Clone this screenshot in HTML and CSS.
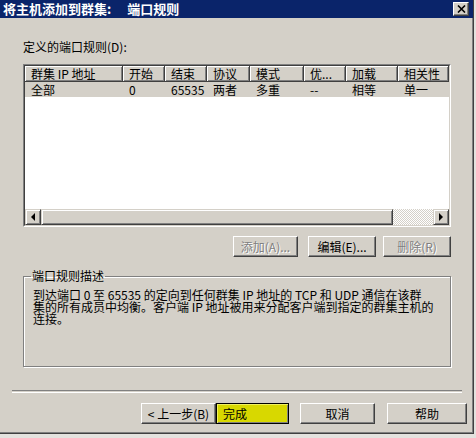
FILE: index.html
```html
<!DOCTYPE html>
<html lang="zh-CN">
<head>
    <meta charset="UTF-8">
    <title>将主机添加到群集: 端口规则</title>
    <link rel="stylesheet" href="styles.css">
</head>
<body>

    <div class="window">
        <div class="titlebar">
            <span class="title">将主机添加到群集:<span class="title-step">端口规则</span></span>
            <span class="close-btn">
                <svg width="9" height="8" viewBox="0 0 9 8">
                    <path d="M1 0.5 L8 7.5 M8 0.5 L1 7.5" stroke="#000" stroke-width="1.6" fill="none"/>
                </svg>
            </span>
        </div>

        <div class="content">
            <div class="label">定义的端口规则(<u>D</u>):</div>

            <div class="list">
                <div class="list-inner">
                    <div class="list-header">
                        <div class="col">群集 IP 地址</div>
                        <div class="col">开始</div>
                        <div class="col">结束</div>
                        <div class="col">协议</div>
                        <div class="col">模式</div>
                        <div class="col">优...</div>
                        <div class="col">加载</div>
                        <div class="col">相关性</div>
                    </div>
                    <div class="list-row selected">
                        <div class="cell">全部</div>
                        <div class="cell">0</div>
                        <div class="cell">65535</div>
                        <div class="cell">两者</div>
                        <div class="cell">多重</div>
                        <div class="cell">--</div>
                        <div class="cell">相等</div>
                        <div class="cell">单一</div>
                    </div>
                    <div class="list-body"></div>
                    <div class="hscroll">
                        <div class="scroll-btn"><span class="arrow-left"></span></div>
                        <div class="scroll-thumb"></div>
                        <div class="scroll-track"></div>
                        <div class="scroll-btn"><span class="arrow-right"></span></div>
                    </div>
                </div>
            </div>

            <div class="list-buttons">
                <button class="btn btn-add" disabled>添加(<u>A</u>)...</button>
                <button class="btn btn-edit">编辑(<u>E</u>)...</button>
                <button class="btn btn-delete" disabled>删除(<u>R</u>)</button>
            </div>

            <fieldset class="group">
                <legend>端口规则描述</legend>
                <div class="desc">
                    到达端口 0 至 65535 的定向到任何群集 IP 地址的 TCP 和 UDP 通信在该群<br>
                    集的所有成员中均衡。客户端 IP 地址被用来分配客户端到指定的群集主机的<br>
                    连接。
                </div>
            </fieldset>
        </div>

        <div class="separator"></div>

        <div class="wizard-buttons">
            <button class="btn btn-back">&lt; 上一步(<u>B</u>)</button>
            <button class="btn btn-finish">完成</button>
            <button class="btn btn-cancel">取消</button>
            <button class="btn btn-help">帮助</button>
        </div>
    </div>

</body>
</html>
```

FILE: styles.css
```css
body {
    margin: 0;
    padding: 0;
    background-color: #e4e2de;
    font-family: "Noto Sans CJK SC", "DejaVu Sans", sans-serif;
    font-size: 12px;
    color: #000;
}

u { text-decoration: none; }

.window {
    width: 474px;
    height: 434px;
    box-sizing: border-box;
    background-color: #d4d0c8;
    border-right: 1px solid #404040;
    border-bottom: 1px solid #404040;
    box-shadow: inset -1px -1px 0 #808080;
    display: flex;
    flex-direction: column;
}

.titlebar {
    height: 18px;
    background-color: #0a246a;
    color: white;
    display: flex;
    align-items: center;
    justify-content: space-between;
    padding: 0 4px 0 3px;
}

.title {
    font-size: 13px;
    font-weight: bold;
    line-height: 18px;
    white-space: nowrap;
}

.title-step { margin-left: 16px; }

.close-btn {
    width: 16px;
    height: 14px;
    box-sizing: border-box;
    background-color: #d4d0c8;
    border: 1px solid;
    border-color: #fff #404040 #404040 #fff;
    box-shadow: inset -1px -1px 0 #808080;
    display: flex;
    align-items: center;
    justify-content: center;
}

.content {
    padding: 23px 0 0 23px;
    width: 428px;
}

.label {
    line-height: 12px;
    height: 12px;
}

/* list view */
.list {
    margin-top: 11px;
    height: 163px;
    box-sizing: border-box;
    border: 1px solid;
    border-color: #808080 #fff #fff #808080;
}

.list-inner {
    height: 100%;
    box-sizing: border-box;
    border: 1px solid;
    border-color: #404040 #d4d0c8 #d4d0c8 #404040;
    display: flex;
    flex-direction: column;
    background-color: white;
}

.list-header, .list-row {
    display: grid;
    grid-template-columns: 98px 42px 42px 43px 54px 42px 52px 51px;
}

.col {
    height: 16px;
    line-height: 16px;
    box-sizing: border-box;
    padding-left: 6px;
    background-color: #d4d0c8;
    border-right: 1px solid #404040;
    border-bottom: 1px solid #404040;
    box-shadow: inset 1px 1px 0 #fff, inset -1px -1px 0 #808080;
    white-space: nowrap;
    overflow: hidden;
}

.list-row { height: 15px; }
.list-row.selected { background-color: #d4d0c8; }

.cell {
    line-height: 15px;
    padding-left: 6px;
    white-space: nowrap;
}

.list-body { flex: 1; }

.hscroll {
    height: 16px;
    display: flex;
}

.scroll-btn, .scroll-thumb {
    height: 16px;
    box-sizing: border-box;
    background-color: #d4d0c8;
    border: 1px solid;
    border-color: #d4d0c8 #404040 #404040 #d4d0c8;
    box-shadow: inset 1px 1px 0 #fff, inset -1px -1px 0 #808080;
}

.scroll-btn {
    width: 16px;
    display: flex;
    align-items: center;
    justify-content: center;
}

.scroll-thumb { width: 352px; }

.scroll-track {
    flex: 1;
    background: repeating-conic-gradient(#fff 0 25%, #d4d0c8 0 50%) 0 0 / 2px 2px;
}

.arrow-left {
    border-top: 4px solid transparent;
    border-bottom: 4px solid transparent;
    border-right: 4px solid #000;
}

.arrow-right {
    border-top: 4px solid transparent;
    border-bottom: 4px solid transparent;
    border-left: 4px solid #000;
}

/* buttons */
.btn {
    height: 21px;
    box-sizing: border-box;
    padding: 0;
    font-family: inherit;
    font-size: 12px;
    line-height: 17px;
    color: #000;
    background-color: #d4d0c8;
    border: 1px solid;
    border-color: #fff #404040 #404040 #fff;
    box-shadow: inset -1px -1px 0 #808080;
    border-radius: 0;
}

.btn:disabled {
    color: #808080;
    text-shadow: 1px 1px 0 #fff;
}

.list-buttons {
    margin-top: 9px;
    display: flex;
    justify-content: flex-end;
}

.btn-add { width: 65px; }
.btn-edit { width: 68px; margin-left: 10px; }
.btn-delete { width: 68px; margin-left: 7px; }

.group {
    margin: 13px 0 0;
    padding: 7px 0 0 9px;
    height: 97px;
    box-sizing: border-box;
    border: 1px solid #808080;
    box-shadow: 1px 1px 0 #fff, inset 1px 1px 0 #fff;
}

.group legend {
    margin-left: -2px;
    padding: 0 1px;
    line-height: 12px;
}

/* the dialog packs these lines at a 12px pitch */
.desc {
    line-height: 12px;
    white-space: nowrap;
}

.separator {
    margin: 23px 0 0 12px;
    width: 450px;
    height: 1px;
    border-top: 1px solid #808080;
    border-bottom: 1px solid #fff;
}

.wizard-buttons {
    margin: 10px 0 0 141px;
    display: flex;
}

.btn-back { width: 75px; }

.btn-finish {
    width: 73px;
    background-color: #d8d800;
    border-color: #000;
    box-shadow: inset 1px 1px 0 #f0f060, inset -1px -1px 0 #808080;
    text-align: left;
    padding-left: 6px;
}

.btn-cancel { width: 75px; margin-left: 11px; }
.btn-help { width: 80px; margin-left: 12px; }
```
